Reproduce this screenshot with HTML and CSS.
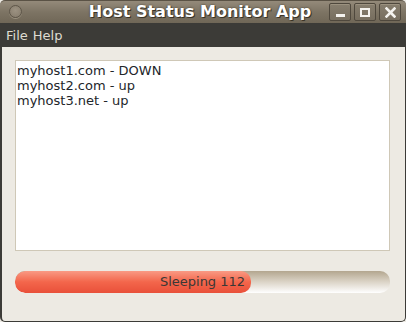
FILE: index.html
```html
<!DOCTYPE html>
<html>
<head>
<meta charset="utf-8">
<link rel="stylesheet" href="styles.css">
</head>
<body>
<div class="window">
  <div class="titlebar">
    <div class="menu-btn"></div>
    <div class="title">Host Status Monitor App</div>
    <div class="controls">
      <div class="ctl"><span class="min-glyph"></span></div>
      <div class="ctl"><span class="max-glyph"></span></div>
      <div class="ctl"><svg width="11" height="11" viewBox="0 0 11 11"><path d="M1.5 1.5 L9.5 9.5 M9.5 1.5 L1.5 9.5" stroke="#f4f2ee" stroke-width="2.6" stroke-linecap="square"/></svg></div>
    </div>
  </div>
  <div class="menubar"><span class="menu-item">File</span><span class="menu-item">Help</span></div>
  <div class="body">
    <div class="textarea">
      <div class="line">myhost1.com - DOWN</div>
      <div class="line">myhost2.com - up</div>
      <div class="line">myhost3.net - up</div>
    </div>
    <div class="progress">
      <div class="fill" style="width:63%"></div>
      <div class="label">Sleeping 112</div>
    </div>
  </div>
</div>
</body>
</html>
```
FILE: styles.css
```css
html, body { margin: 0; padding: 0; }
body { width: 406px; height: 322px; background: #edeae3; overflow: hidden; font-family: "DejaVu Sans", sans-serif; }
.window { width: 406px; height: 322px; box-sizing: border-box; display: flex; flex-direction: column; }
.titlebar {
  height: 23px; flex: none; position: relative;
  background: linear-gradient(#948a7a, #7d7464 50%, #706757);
  border-radius: 5px 5px 0 0;
  border-top: 1px solid #5a5245;
  box-sizing: border-box;
  display: flex; align-items: center;
}
.menu-btn {
  position: absolute; left: 9px; top: 4px; width: 11px; height: 11px;
  border-radius: 50%; border: 1px solid #5e5649;
  background: radial-gradient(circle at 50% 40%, #9c9282, #857b6b);
  box-shadow: 0 1px 0 #9a917f;
}
.title {
  flex: 1; text-align: center; font-weight: bold; font-size: 16px; color: #ffffff;
  text-shadow: 1px 1px 0 #3a3326, 0 0 2px #3a3326;
  padding-right: 6px; margin-top: -2px;
}
.controls { position: absolute; right: 5px; top: 2px; display: flex; gap: 3px; }
.ctl {
  width: 22px; height: 18px; box-sizing: border-box;
  border: 1px solid #4f483d; border-radius: 2px;
  background: linear-gradient(#877e6e, #776e5f);
  box-shadow: inset 0 1px 0 #9b917f;
  display: flex; align-items: center; justify-content: center;
}
.min-glyph { width: 9px; height: 3px; background: #f4f2ee; margin-top: 6px; }
.max-glyph { width: 6px; height: 5px; border: 2px solid #f4f2ee; }
.menubar {
  height: 24px; flex: none; background: #3c3b37; color: #dfdbd2;
  font-size: 13px; display: flex; align-items: center; padding-left: 6px; gap: 5px;
}
.body {
  flex: 1; border: 1px solid #3c3b37; border-top: none;
  border-left-width: 2px; border-radius: 0 0 5px 5px;
  padding: 13px 15px 0 13px;
  display: flex; flex-direction: column;
}
.textarea {
  height: 191px; background: #ffffff; border: 1px solid #cfc8b7;
  padding: 2px 1px; box-sizing: border-box;
  font-size: 13px; line-height: 15px; color: #22262a;
}
.progress {
  margin-top: 20px; height: 22px; position: relative;
  border-radius: 10px; overflow: hidden;
  background: linear-gradient(#b3a68f, #d8d0c2 45%, #ffffff);
}
.fill {
  position: absolute; left: 0; top: 0; bottom: 0;
  border-radius: 10px;
  background: linear-gradient(#f99a84, #f3664b 50%, #e9503a);
}
.label {
  position: absolute; inset: 0; text-align: center; line-height: 22px;
  font-size: 13px; color: #3a3836;
}
```
